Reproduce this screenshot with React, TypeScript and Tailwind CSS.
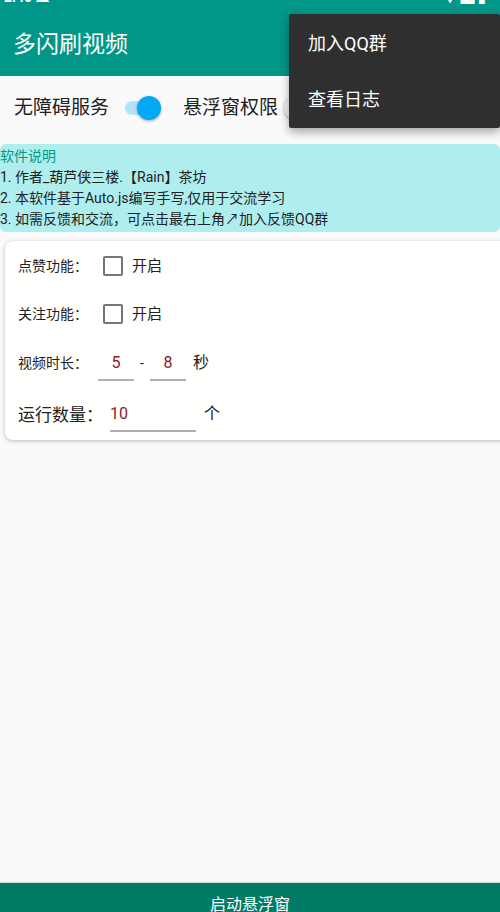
import React from "react";

const font = { fontFamily: "Roboto, 'Noto Sans CJK SC', sans-serif" };

const Switch = ({ on }: { on: boolean }) => (
  <div className="relative w-[38px] h-[24px] flex items-center">
    <div className={`w-[34px] h-[14px] rounded-full ml-[2px] ${on ? "bg-[#b3e3fa]" : "bg-[#bdbdbd]"}`} />
    <div
      className={`absolute top-0 w-[24px] h-[24px] rounded-full shadow-[0_1px_3px_rgba(0,0,0,0.35)] ${
        on ? "right-0 bg-[#03a9f4]" : "left-0 bg-[#f1f1f1]"
      }`}
    />
  </div>
);

const Checkbox = () => (
  <div className="w-[20px] h-[20px] border-2 border-[#757575] rounded-[2px]" />
);

const App: React.FC = () => {
  return (
    <div className="relative w-[500px] h-[912px] bg-[#fafafa] flex flex-col overflow-hidden" style={font}>
      {/* top bar */}
      <div className="h-[76px] bg-[#009688] flex flex-col">
        <div className="h-[4px] overflow-hidden flex justify-between px-[4px]">
          <span className="text-white text-[14px] font-bold leading-none -mt-[10px]">2:40 ▲</span>
          <span className="text-white text-[14px] font-bold leading-none -mt-[10px] mr-[10px]">▼ ▆ ▮</span>
        </div>
        <div className="flex-1 flex items-center pl-[13px] pt-[8px]">
          <h1 className="text-white text-[23px] leading-none">多闪刷视频</h1>
        </div>
      </div>

      {/* switches */}
      <div className="h-[64px] flex items-center pl-[14px]">
        <span className="text-[19px] text-[#212121] mr-[14px]">无障碍服务</span>
        <Switch on />
        <span className="text-[19px] text-[#212121] ml-[22px] mr-[6px]">悬浮窗权限</span>
        <Switch on={false} />
      </div>

      {/* info */}
      <div className="mt-[4px] bg-[#afeeee] rounded-[6px] py-[2px] text-[14px] leading-[21px]">
        <div className="text-[#009a8a]">软件说明</div>
        <div className="text-[#212121]">1. 作者_葫芦侠三楼.【Rain】茶坊</div>
        <div className="text-[#212121]">2. 本软件基于Auto.js编写手写,仅用于交流学习</div>
        <div className="text-[#212121]">3. 如需反馈和交流，可点击最右上角↗加入反馈QQ群</div>
      </div>

      {/* card */}
      <div className="mt-[9px] ml-[5px] -mr-[10px] bg-[#fffffd] rounded-[8px] shadow-[0_1px_4px_rgba(0,0,0,0.25)] pl-[13px] pt-[13px] pb-[8px] text-[#212121]">
        <div className="h-[24px] flex items-center">
          <span className="text-[14px] w-[85px]">点赞功能：</span>
          <Checkbox />
          <span className="text-[15px] ml-[9px]">开启</span>
        </div>
        <div className="h-[24px] mt-[24px] flex items-center">
          <span className="text-[14px] w-[85px]">关注功能：</span>
          <Checkbox />
          <span className="text-[15px] ml-[9px]">开启</span>
        </div>
        <div className="mt-[25px] flex items-end">
          <span className="text-[14px] w-[80px] pb-[7px]">视频时长：</span>
          <div className="w-[36px] border-b-2 border-[#b0b0b0] text-center text-[#8b1a2b] text-[16px] pb-[4px]">5</div>
          <span className="text-[14px] mx-[6px] pb-[7px]">-</span>
          <div className="w-[36px] border-b-2 border-[#b0b0b0] text-center text-[#8b1a2b] text-[16px] pb-[4px]">8</div>
          <span className="text-[16px] ml-[7px] pb-[6px]">秒</span>
        </div>
        <div className="mt-[21px] flex items-end">
          <span className="text-[17px] w-[92px] pb-[4px]">运行数量：</span>
          <div className="w-[86px] border-b-2 border-[#b0b0b0] text-[#8b1a2b] text-[16px] pb-[4px]">10</div>
          <span className="text-[16px] ml-[8px] pb-[6px]">个</span>
        </div>
      </div>

      <div className="flex-1" />

      {/* bottom button */}
      <div className="h-[29px] bg-[#007c66] flex justify-center overflow-hidden shadow-[0_-1px_1px_rgba(0,0,0,0.12)]">
        <span className="text-white text-[16px] leading-none mt-[14px]">启动悬浮窗</span>
      </div>

      {/* overflow menu */}
      <div className="absolute top-[14px] right-0 w-[211px] h-[114px] bg-[#2f2f2f] rounded-[2px] shadow-[0_4px_10px_rgba(0,0,0,0.35)] flex flex-col">
        <div className="h-[57px] flex items-center pl-[19px] pt-[2px]">
          <span className="text-white text-[18px]">加入QQ群</span>
        </div>
        <div className="h-[57px] flex items-center pl-[19px]">
          <span className="text-white text-[18px]">查看日志</span>
        </div>
      </div>
    </div>
  );
};

export default App;
